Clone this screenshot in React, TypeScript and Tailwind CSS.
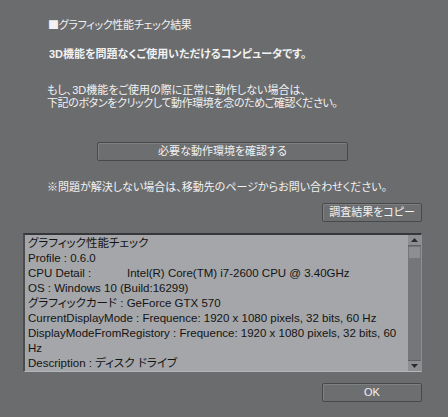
import React from "react";

const font = { fontFamily: '"Liberation Sans", "Noto Sans CJK JP", sans-serif', fontFeatureSettings: '"palt"' } as React.CSSProperties;

function Btn({ label, className }: { label: string; className: string }) {
  return (
    <div
      className={
        "flex items-center justify-center rounded-[2px] border border-[#48494b] bg-[#6d6e70] text-[11px] leading-none text-[#f2f2f2] shadow-[inset_1px_1px_0_#7f8082] " +
        className
      }
    >
      {label}
    </div>
  );
}

export default function App() {
  const lines: React.ReactNode[] = [
    "グラフィック性能チェック",
    "Profile : 0.6.0",
    <span key="cpu">
      <span className="inline-block w-[99px]">CPU Detail :</span>Intel(R) Core(TM) i7-2600 CPU @ 3.40GHz
    </span>,
    "OS : Windows 10 (Build:16299)",
    "グラフィックカード : GeForce GTX 570",
    "CurrentDisplayMode : Frequence: 1920 x 1080 pixels, 32 bits, 60 Hz",
    "DisplayModeFromRegistory : Frequence: 1920 x 1080 pixels, 32 bits, 60",
    "Hz",
    "Description : ディスク ドライブ",
  ];
  return (
    <div className="w-[448px] h-[417px] bg-[#6b6c6e] overflow-hidden flex flex-col text-[#f2f2f2]" style={font}>
      <div className="ml-[48px] mt-[18px] text-[11px] leading-[12px] tracking-[-0.3px]">
        <span style={{ fontFamily: '"Noto Sans CJK JP", sans-serif' }}>■</span>グラフィック性能チェック結果
      </div>
      <div className="ml-[49px] mt-[16px] text-[11px] leading-[14px] font-bold">3D機能を問題なくご使用いただけるコンピュータです。</div>
      <div className="ml-[47px] mt-[23px] text-[11px] leading-[12.5px]">
        <div>もし、3D機能をご使用の際に正常に動作しない場合は、</div>
        <div className="tracking-[-0.4px]">下記のボタンをクリックして動作環境を念のためご確認ください。</div>
      </div>
      <Btn label="必要な動作環境を確認する" className="ml-[97px] mt-[33px] w-[251px] h-[19px]" />
      <div className="ml-[47px] mt-[19px] text-[11px] leading-[14px]">※問題が解決しない場合は、移動先のページからお問い合わせください。</div>
      <Btn label="調査結果をコピー" className="ml-[322px] mt-[9px] w-[100px] h-[19px]" />
      <div className="ml-[23px] mt-[11px] w-[399px] h-[139px] flex border-t-2 border-l-2 border-t-[#35373a] border-l-[#4a4c4f] border-b border-r border-b-[#b4b6b8] border-r-[#8d8f92] bg-[#a4a6a9]">
        <div className="flex-1 overflow-hidden pl-[3px] pt-[1px] text-[11.5px] leading-[15px] text-[#141414] whitespace-nowrap">
          {lines.map((l, i) => (
            <div key={i}>{l}</div>
          ))}
        </div>
        <div className="w-[13px] h-full flex flex-col bg-[#74767a]">
          <div className="h-[11px] bg-[#8c8e91] flex items-center justify-center border-b border-[#5e6063]">
            <svg width="7" height="4" viewBox="0 0 7 4"><path d="M3.5 0L7 4H0z" fill="#2a2b2d" /></svg>
          </div>
          <div className="mt-[1px] h-[11px] mx-[1px] bg-[#8c8e91] rounded-[1px]" />
          <div className="flex-1" />
          <div className="h-[11px] bg-[#8c8e91] flex items-center justify-center border-t border-[#5e6063]">
            <svg width="7" height="4" viewBox="0 0 7 4"><path d="M0 0H7L3.5 4z" fill="#2a2b2d" /></svg>
          </div>
        </div>
      </div>
      <Btn label="OK" className="ml-[322px] mt-[11px] w-[100px] h-[19px]" />
    </div>
  );
}
